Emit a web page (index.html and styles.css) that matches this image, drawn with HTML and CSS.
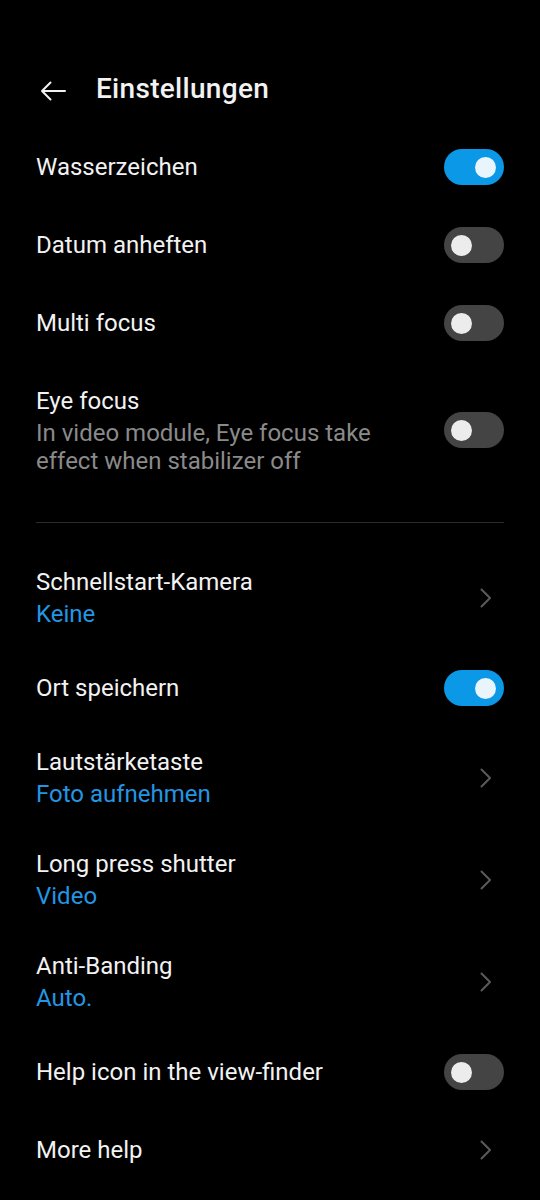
FILE: index.html
```html
<!DOCTYPE html>
<html lang="de">
<head>
<meta charset="utf-8">
<title>Einstellungen</title>
<link rel="stylesheet" href="styles.css">
</head>
<body>
<div class="screen">
  <header class="header">
    <svg class="back" width="26" height="20" viewBox="0 0 26 20" aria-hidden="true">
      <path d="M25 10H2M10.5 1.5L2 10l8.5 8.5" fill="none" stroke="#f2f2f2" stroke-width="2" stroke-linecap="round" stroke-linejoin="round"/>
    </svg>
    <h1 class="title">Einstellungen</h1>
  </header>

  <div class="row">
    <div class="text"><div class="label">Wasserzeichen</div></div>
    <span class="switch on"></span>
  </div>
  <div class="row">
    <div class="text"><div class="label">Datum anheften</div></div>
    <span class="switch"></span>
  </div>
  <div class="row">
    <div class="text"><div class="label">Multi focus</div></div>
    <span class="switch"></span>
  </div>
  <div class="row row-desc">
    <div class="text">
      <div class="label">Eye focus</div>
      <div class="desc">In video module, Eye focus take effect when stabilizer off</div>
    </div>
    <span class="switch"></span>
  </div>

  <div class="divider"></div>

  <div class="row row-two">
    <div class="text">
      <div class="label">Schnellstart-Kamera</div>
      <div class="value">Keine</div>
    </div>
    <svg class="chev" width="14" height="20" viewBox="0 0 14 20" aria-hidden="true"><path d="M2.5 1.5l8.5 8.5-8.5 8.5" fill="none" stroke="#5a5a5a" stroke-width="2" stroke-linecap="round" stroke-linejoin="round"/></svg>
  </div>
  <div class="row">
    <div class="text"><div class="label">Ort speichern</div></div>
    <span class="switch on"></span>
  </div>
  <div class="row row-two">
    <div class="text">
      <div class="label">Lautstärketaste</div>
      <div class="value">Foto aufnehmen</div>
    </div>
    <svg class="chev" width="14" height="20" viewBox="0 0 14 20" aria-hidden="true"><path d="M2.5 1.5l8.5 8.5-8.5 8.5" fill="none" stroke="#5a5a5a" stroke-width="2" stroke-linecap="round" stroke-linejoin="round"/></svg>
  </div>
  <div class="row row-two">
    <div class="text">
      <div class="label">Long press shutter</div>
      <div class="value">Video</div>
    </div>
    <svg class="chev" width="14" height="20" viewBox="0 0 14 20" aria-hidden="true"><path d="M2.5 1.5l8.5 8.5-8.5 8.5" fill="none" stroke="#5a5a5a" stroke-width="2" stroke-linecap="round" stroke-linejoin="round"/></svg>
  </div>
  <div class="row row-two">
    <div class="text">
      <div class="label">Anti-Banding</div>
      <div class="value">Auto.</div>
    </div>
    <svg class="chev" width="14" height="20" viewBox="0 0 14 20" aria-hidden="true"><path d="M2.5 1.5l8.5 8.5-8.5 8.5" fill="none" stroke="#5a5a5a" stroke-width="2" stroke-linecap="round" stroke-linejoin="round"/></svg>
  </div>
  <div class="row">
    <div class="text"><div class="label">Help icon in the view-finder</div></div>
    <span class="switch"></span>
  </div>
  <div class="row">
    <div class="text"><div class="label">More help</div></div>
    <svg class="chev" width="14" height="20" viewBox="0 0 14 20" aria-hidden="true"><path d="M2.5 1.5l8.5 8.5-8.5 8.5" fill="none" stroke="#5a5a5a" stroke-width="2" stroke-linecap="round" stroke-linejoin="round"/></svg>
  </div>
</div>
</body>
</html>
```

FILE: styles.css
```css
html, body {
  margin: 0;
  padding: 0;
  background: #000;
}
body {
  font-family: Roboto, "Noto Sans", "Liberation Sans", sans-serif;
  color: #f2f2f2;
  width: 540px;
  height: 1200px;
  overflow: hidden;
}
.screen {
  display: flex;
  flex-direction: column;
}
.header {
  display: flex;
  align-items: center;
  height: 79px;
  margin-top: 49px;
  padding-left: 40px;
}
.back {
  display: block;
  flex: none;
  margin-top: 4px;
}
.title {
  margin: 0 0 0 30px;
  font-size: 28px;
  font-weight: 500;
  letter-spacing: 0.3px;
  line-height: 34px;
  color: #f2f2f2;
}
.row {
  display: flex;
  align-items: center;
  justify-content: space-between;
  min-height: 78px;
  box-sizing: border-box;
  padding: 0 36px;
  gap: 24px;
}
.row-desc {
  padding-top: 23px;
  padding-bottom: 23px;
}
.row-two {
  min-height: 102px;
  padding-top: 19px;
  padding-bottom: 19px;
}
.text {
  display: flex;
  flex-direction: column;
  max-width: 384px;
}
.label {
  font-size: 24px;
  line-height: 32px;
  color: #f2f2f2;
}
.desc {
  font-size: 24px;
  line-height: 28px;
  margin-top: 2px;
  color: #8a8a8a;
}
.value {
  font-size: 24px;
  line-height: 32px;
  color: #2396e3;
}
.switch {
  flex: none;
  position: relative;
  width: 60px;
  height: 36px;
  border-radius: 18px;
  background: #444444;
}
.switch::after {
  content: "";
  position: absolute;
  top: 7.5px;
  left: 7px;
  width: 21px;
  height: 21px;
  border-radius: 50%;
  background: #ececec;
}
.switch.on {
  background: #0b98e6;
}
.switch.on::after {
  left: auto;
  right: 8px;
  background: #e8f5fd;
}
.chev {
  flex: none;
  display: block;
  margin-right: 11px;
}
.divider {
  height: 1px;
  background: #2c2c2c;
  margin: 24px 36px;
}
```
